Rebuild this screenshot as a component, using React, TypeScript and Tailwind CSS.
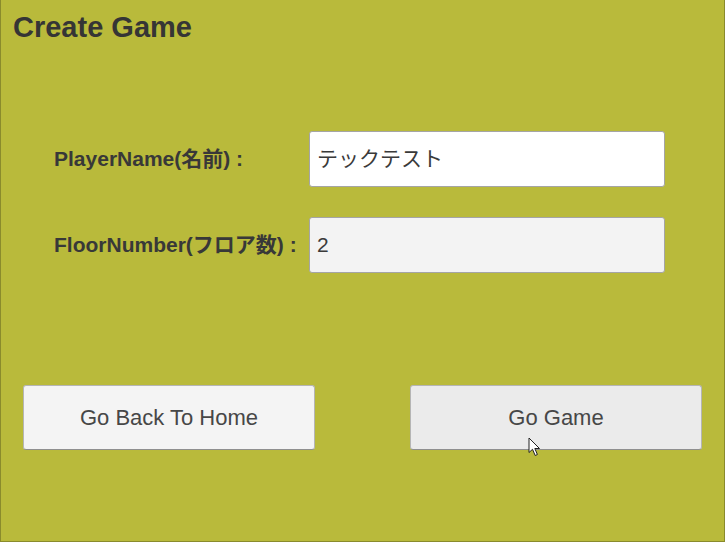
import React from 'react';

const font = { fontFamily: '"Liberation Sans", "Noto Sans CJK JP", sans-serif' };

const Cursor: React.FC = () => (
  <svg className="absolute left-[527px] top-[437px]" width="13" height="20" viewBox="0 0 13 20">
    <path d="M1 1 L1 15.5 L4.5 12.3 L7.2 18.5 L9.4 17.5 L6.8 11.5 L11.5 11.5 Z" fill="#fff" stroke="#222" strokeWidth="1" strokeLinejoin="round" />
  </svg>
);

const App: React.FC = () => {
  return (
    <div
      className="relative w-[725px] h-[542px] bg-[#b9ba3b] border-x border-b border-[#8a8b2c] flex flex-col text-[#333]"
      style={font}
    >
      <h1 className="ml-[12px] mt-[10px] text-[29px] leading-[35px] font-bold text-[#353535]">Create Game</h1>

      <div className="mt-[86px] flex flex-col gap-[30px]">
        <div className="flex items-center">
          <label className="shrink-0 w-[308px] pl-[53px] text-[21px] font-bold text-[#383838] whitespace-nowrap">PlayerName(名前) :</label>
          <div className="shrink-0 w-[356px] h-[56px] flex items-center px-[7px] bg-white border border-[#a5a5a5] rounded-[3px] text-[21px] text-[#3a3a3a]">
            テックテスト
          </div>
        </div>
        <div className="flex items-center">
          <label className="shrink-0 w-[308px] pl-[53px] text-[21px] font-bold text-[#383838] whitespace-nowrap">FloorNumber(フロア数) :</label>
          <div className="shrink-0 w-[356px] h-[56px] flex items-center px-[7px] bg-[#f3f3f3] border border-[#a5a5a5] rounded-[3px] text-[21px] text-[#3a3a3a]">
            2
          </div>
        </div>
      </div>

      <div className="mt-[112px] flex justify-between px-[22px]">
        <button className="w-[292px] h-[65px] bg-[#f4f4f4] border border-[#b5b5b5] border-b-[#8f8f8f] rounded-[3px] text-[22px] text-[#474747]">
          Go Back To Home
        </button>
        <button className="w-[292px] h-[65px] bg-[#ebebeb] border border-[#b5b5b5] border-b-[#8f8f8f] rounded-[3px] text-[22px] text-[#474747]">
          Go Game
        </button>
      </div>

      <Cursor />
    </div>
  );
};

export default App;
